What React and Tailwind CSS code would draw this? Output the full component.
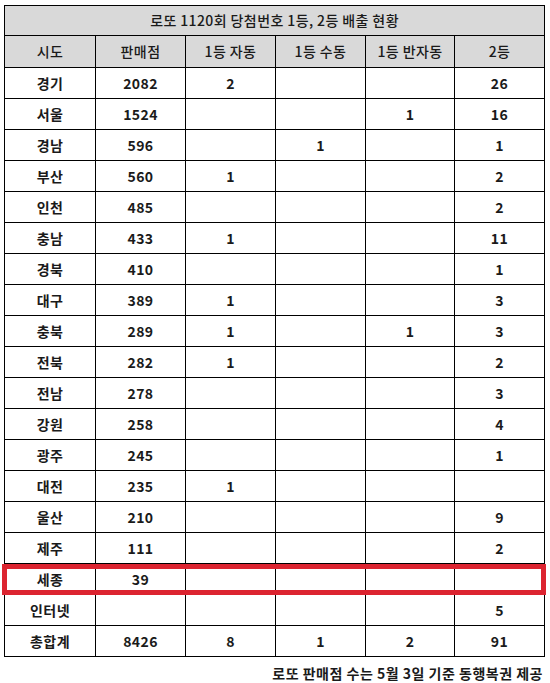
import React from 'react';

const rows = [
  ['경기', '2082', '2', '', '', '26'],
  ['서울', '1524', '', '', '1', '16'],
  ['경남', '596', '', '1', '', '1'],
  ['부산', '560', '1', '', '', '2'],
  ['인천', '485', '', '', '', '2'],
  ['충남', '433', '1', '', '', '11'],
  ['경북', '410', '', '', '', '1'],
  ['대구', '389', '1', '', '', '3'],
  ['충북', '289', '1', '', '1', '3'],
  ['전북', '282', '1', '', '', '2'],
  ['전남', '278', '', '', '', '3'],
  ['강원', '258', '', '', '', '4'],
  ['광주', '245', '', '', '', '1'],
  ['대전', '235', '1', '', '', ''],
  ['울산', '210', '', '', '', '9'],
  ['제주', '111', '', '', '', '2'],
  ['세종', '39', '', '', '', ''],
  ['인터넷', '', '', '', '', '5'],
  ['총합계', '8426', '8', '1', '2', '91'],
];

const heads = ['시도', '판매점', '1등 자동', '1등 수동', '1등 반자동', '2등'];
const widths = ['w-[91px]', 'w-[90px]', 'w-[90px]', 'w-[90px]', 'w-[89px]', 'w-[90px]'];

export default function App() {
  return (
    <div className="w-[550px] h-[683px] bg-white pt-[5px] pl-[4px] text-[#1a1a1a] text-[14px] tracking-[0.4px]" style={{ fontFamily: '"Noto Sans CJK KR", "Noto Sans", sans-serif' }}>
      <table className="border-collapse table-fixed w-[541px]">
        <colgroup>
          {widths.map((w, i) => <col key={i} className={w} />)}
        </colgroup>
        <thead>
          <tr className="h-[30px] bg-[#d9d9d9]">
            <th colSpan={6} className="border border-black font-medium text-center p-0">로또 1120회 당첨번호 1등, 2등 배출 현황</th>
          </tr>
          <tr className="h-[32px] bg-[#d9d9d9]">
            {heads.map((h) => (
              <th key={h} className="border border-black font-medium text-center p-0">{h}</th>
            ))}
          </tr>
        </thead>
        <tbody>
          {rows.map((r) => (
            <tr key={r[0]} className="h-[31px]">
              {r.map((c, i) => (
                <td key={i} className="relative border border-black text-center font-bold p-0">
                  {c}
                  {r[0] === '세종' && i === 0 && (
                    <div className="absolute left-[-3px] top-0 w-[544px] h-[31px] border-[5px] border-[#dc2430] pointer-events-none" />
                  )}
                </td>
              ))}
            </tr>
          ))}
        </tbody>
      </table>
      <p className="mt-[8px] pr-[7px] text-right font-bold leading-[17px] tracking-[0.5px]">로또 판매점 수는 5월 3일 기준 동행복권 제공</p>
    </div>
  );
}
